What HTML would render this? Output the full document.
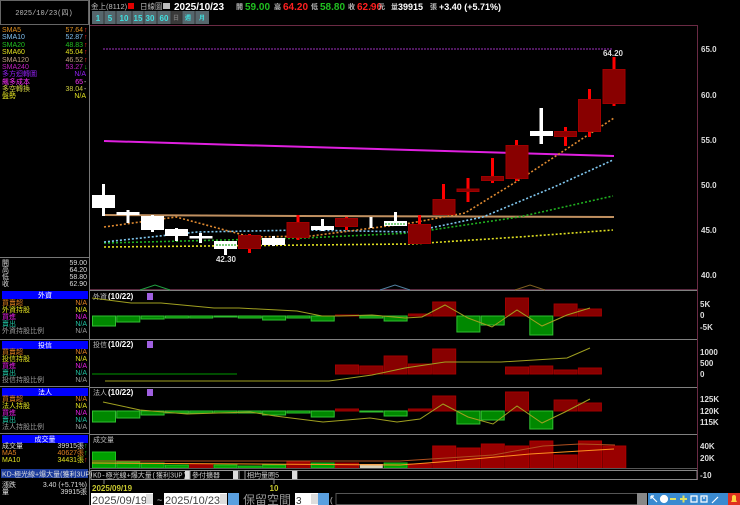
<!DOCTYPE html>
<html><head><meta charset="utf-8">
<style>
html,body{margin:0;padding:0;background:#000;width:740px;height:505px;overflow:hidden}
svg{display:block}
text{font-family:"Liberation Sans","Noto Sans CJK TC",sans-serif}
.s{font-size:7px;font-family:"Liberation Mono","Noto Sans CJK TC",monospace}
.ax{font-size:8px;fill:#ddd;font-weight:bold}
</style></head><body>
<svg width="740" height="505" viewBox="0 0 740 505" xmlns="http://www.w3.org/2000/svg">
<rect width="740" height="505" fill="#000"/>
<!-- left top box -->
<rect x="0.5" y="0.5" width="88" height="24" fill="#000" stroke="#666"/>
<text x="44" y="15" class="s" fill="#bbb" text-anchor="middle">2025/10/23(四)</text>
<line x1="89.5" y1="0" x2="89.5" y2="505" stroke="#777"/>
<!-- header -->
<text x="91" y="9" font-size="7.5" fill="#bbb">金上(8112)</text>
<rect x="128" y="3" width="6" height="6" fill="#e00000"/>
<text x="140" y="9" font-size="7.5" fill="#bbb">日線圖</text>
<rect x="163" y="3" width="7" height="6" fill="#bbb"/>
<g font-weight="bold" font-size="10">
<text x="174" y="10" fill="#fff">2025/10/23</text>
<text x="236" y="9" font-size="7" fill="#bbb">開</text><text x="245" y="10" fill="#20c020">59.00</text>
<text x="274" y="9" font-size="7" fill="#bbb">高</text><text x="283" y="10" fill="#ff2020">64.20</text>
<text x="311" y="9" font-size="7" fill="#bbb">低</text><text x="320" y="10" fill="#20c020">58.80</text>
<text x="348" y="9" font-size="7" fill="#bbb">收</text><text x="357" y="10" fill="#ff2020">62.90</text>
<text x="369" y="9" font-size="7" fill="#ff2020">↑</text>
<text x="378" y="9" font-size="7" fill="#bbb">元</text>
<text x="391" y="9" font-size="7" fill="#bbb">量</text>
<text x="398" y="10" fill="#fff" font-size="9">39915</text>
<text x="430" y="9" font-size="7" fill="#bbb">張</text>
<text x="439" y="10" fill="#fff" font-size="9">+3.40 (+5.71%)</text>
</g>
<!-- buttons -->
<g font-size="8" fill="#40e0e0" font-weight="bold" text-anchor="middle">
<rect x="92" y="11" width="117" height="13" fill="#56666c"/>
<rect x="171" y="11" width="11" height="13" fill="#3a3a3a"/>
<g stroke="#333"><line x1="104" y1="11" x2="104" y2="24"/><line x1="116" y1="11" x2="116" y2="24"/><line x1="132" y1="11" x2="132" y2="24"/><line x1="144" y1="11" x2="144" y2="24"/><line x1="157" y1="11" x2="157" y2="24"/><line x1="171" y1="11" x2="171" y2="24"/><line x1="182" y1="11" x2="182" y2="24"/><line x1="195" y1="11" x2="195" y2="24"/></g>
<text x="98" y="21">1</text><text x="110" y="21">5</text><text x="124" y="21">10</text><text x="138" y="21">15</text><text x="150" y="21">30</text><text x="164" y="21">60</text>
<text x="176" y="20" font-size="6" fill="#777">日</text><text x="188" y="20" font-size="6">週</text><text x="202" y="20" font-size="6">月</text>
</g>
<!-- chart frame -->
<line x1="90" y1="25.5" x2="697" y2="25.5" stroke="#6a2a44"/>
<line x1="697.5" y1="25" x2="697.5" y2="480" stroke="#6a2a44"/>
<g stroke="#808080"><line x1="90" y1="290.5" x2="697" y2="290.5"/><line x1="90" y1="339.5" x2="697" y2="339.5"/><line x1="90" y1="387.5" x2="697" y2="387.5"/><line x1="90" y1="434.5" x2="697" y2="434.5"/></g>
<line x1="90" y1="289.5" x2="697" y2="289.5" stroke="#5a2a40"/>
<!-- price axis -->
<text x="701" y="52" class="ax">65.0</text><text x="701" y="98" class="ax">60.0</text><text x="701" y="143" class="ax">55.0</text><text x="701" y="188" class="ax">50.0</text><text x="701" y="233" class="ax">45.0</text><text x="701" y="278" class="ax">40.0</text>
<line x1="103" y1="49" x2="612" y2="49" stroke="#a030c0" stroke-dasharray="2,1"/>
<text x="613" y="56" font-size="8" fill="#ddd" font-weight="bold" text-anchor="middle">64.20</text>
<text x="226" y="262" font-size="8" fill="#ddd" font-weight="bold" text-anchor="middle">42.30</text>
<!-- MAs -->
<polyline points="104,141 614,156" fill="none" stroke="#e020e0" stroke-width="2"/>
<polyline points="104,215 300,216 614,217" fill="none" stroke="#c09060" stroke-width="2"/>
<g fill="none" stroke-width="1.6" stroke-dasharray="2,2">
<polyline points="104,247 411,244 519,237 613,230" stroke="#e0e020"/>
<polyline points="104,243 304,238 411,233 519,217 613,196" stroke="#20b020"/>
<polyline points="104,242 197,232 304,230 411,232 483,217 554,187 613,160" stroke="#80c8f0"/>
<polyline points="104,227 176,217 251,237 311,236 411,223 465,213 519,180 565,150 614,118" stroke="#e08a30"/>
</g>
<!-- small humps -->
<polyline points="140,290 155,285 170,290" fill="none" stroke="#20a040"/>
<polyline points="380,290 395,285 410,290" fill="none" stroke="#5080a0"/>
<polyline points="515,290 530,285 545,290" fill="none" stroke="#806020"/>
<!-- candles -->
<g fill="#fff" stroke="none">
<rect x="102" y="184" width="3" height="32"/><rect x="92" y="195" width="23" height="13"/>
<rect x="126.5" y="210" width="3" height="13"/><rect x="116.5" y="212" width="23" height="3"/>
<rect x="151" y="215" width="3" height="17"/><rect x="141" y="216" width="23" height="14"/>
<rect x="175" y="228" width="3" height="13"/><rect x="165" y="229" width="23" height="7"/>
<rect x="199" y="233" width="3" height="10"/><rect x="189.5" y="236" width="23" height="2.5"/>
<rect x="224" y="241" width="3" height="14"/><rect x="214" y="241" width="23" height="8"/>
<rect x="272" y="236" width="3" height="10"/><rect x="262" y="238" width="23" height="7"/>
<rect x="321" y="219" width="3" height="12"/><rect x="311" y="226" width="23" height="4"/>
<rect x="369.5" y="217" width="3" height="11"/>
<rect x="394" y="212" width="3" height="14"/><rect x="384" y="221" width="23" height="5"/>
<rect x="539.5" y="108" width="3.5" height="36"/><rect x="530" y="131" width="23" height="5"/>
</g>
<g stroke="#00a000" stroke-width="1" stroke-dasharray="2,1"><line x1="216" y1="245" x2="236" y2="245"/><line x1="385" y1="224" x2="405" y2="224"/></g>
<g fill="#ff0000">
<rect x="248" y="234" width="3" height="19"/><rect x="296.5" y="215" width="3" height="25"/><rect x="345" y="217" width="3" height="13"/>
<rect x="418" y="215" width="3" height="29"/><rect x="442" y="184" width="3" height="31"/><rect x="466.5" y="178" width="3" height="24"/>
<rect x="491" y="158" width="3" height="25"/><rect x="515" y="140" width="3" height="41"/><rect x="564" y="127" width="3" height="19"/>
<rect x="588" y="89" width="3" height="48"/><rect x="612.5" y="57" width="3" height="49"/>
</g>
<g fill="#880000" stroke="#a00000">
<rect x="238.5" y="235.5" width="22" height="13"/><rect x="287" y="222.5" width="22" height="15"/><rect x="335.5" y="218.5" width="22" height="8"/>
<rect x="408.5" y="224.5" width="22" height="19"/><rect x="433" y="199.5" width="22" height="15"/><rect x="457" y="189" width="22" height="2.5"/>
<rect x="481.5" y="176.5" width="22" height="4"/><rect x="506" y="145.5" width="22" height="33"/><rect x="554.5" y="131.5" width="22" height="5"/>
<rect x="578.5" y="99.5" width="22" height="32"/><rect x="603" y="69.5" width="22" height="34"/>
</g>
<!-- panel 1 外資 -->
<text x="93" y="299" font-size="7" fill="#bbb">外資</text><text x="108" y="299" font-size="8" fill="#fff" font-weight="bold">(10/22)</text>
<rect x="147" y="293" width="6" height="7" fill="#a060e0"/>
<text x="700" y="307" class="ax">5K</text><text x="700" y="318" class="ax">0</text><text x="700" y="330" class="ax">-5K</text>
<g fill="#008800" stroke="#30c030">
<rect x="92.5" y="316" width="23" height="10"/><rect x="116.8" y="316" width="23" height="6"/><rect x="141.1" y="316" width="23" height="3"/><rect x="165.4" y="316" width="23" height="2"/><rect x="189.7" y="316" width="23" height="2"/><rect x="214" y="316" width="23" height="1"/><rect x="238.3" y="316" width="23" height="2"/><rect x="262.6" y="316" width="23" height="4"/><rect x="286.9" y="316" width="23" height="2"/><rect x="311.2" y="316" width="23" height="5"/><rect x="359.8" y="316" width="23" height="2"/><rect x="384.1" y="316" width="23" height="5"/><rect x="456.9" y="316" width="23" height="16"/><rect x="481.2" y="316" width="23" height="9"/><rect x="529.8" y="316" width="23" height="19"/>
</g>
<g fill="#880000" stroke="#a00000">
<rect x="335.5" y="315" width="23" height="1"/><rect x="408.4" y="314" width="23" height="2"/><rect x="432.7" y="302" width="23" height="14"/><rect x="505.5" y="298" width="23" height="18"/><rect x="554.1" y="304" width="23" height="12"/><rect x="578.4" y="309" width="23" height="7"/>
</g>
<polyline points="92,298 131,303 161,303 214,308 239,308 297,311 322,316 339,316 372,315 405,318 422,317 445,305 468,318 492,327 517,310 542,326 567,315 590,308" fill="none" stroke="#a0a020"/>
<!-- panel 2 投信 -->
<text x="93" y="347" font-size="7" fill="#bbb">投信</text><text x="108" y="347" font-size="8" fill="#fff" font-weight="bold">(10/22)</text>
<rect x="147" y="341" width="6" height="7" fill="#a060e0"/>
<text x="700" y="355" class="ax">1000</text><text x="700" y="366" class="ax">500</text><text x="700" y="377" class="ax">0</text>
<line x1="92" y1="374" x2="237" y2="374" stroke="#006600" stroke-width="1.5"/>
<g fill="#880000" stroke="#a00000">
<rect x="335.5" y="365" width="23" height="9"/><rect x="359.8" y="366" width="23" height="8"/><rect x="384.1" y="356" width="23" height="18"/><rect x="408.4" y="364" width="23" height="10"/><rect x="432.7" y="349" width="23" height="25"/><rect x="505.5" y="367" width="23" height="7"/><rect x="529.8" y="366" width="23" height="8"/><rect x="554.1" y="370" width="23" height="4"/><rect x="578.4" y="368" width="23" height="6"/>
</g>
<polyline points="105,381 329,381 372,375 405,368 445,362 501,362 567,358 590,348" fill="none" stroke="#a0a020"/>
<!-- panel 3 法人 -->
<text x="93" y="395" font-size="7" fill="#bbb">法人</text><text x="108" y="395" font-size="8" fill="#fff" font-weight="bold">(10/22)</text>
<rect x="147" y="389" width="6" height="7" fill="#a060e0"/>
<text x="700" y="402" class="ax">125K</text><text x="700" y="414" class="ax">120K</text><text x="700" y="425" class="ax">115K</text>
<g fill="#008800" stroke="#30c030">
<rect x="92.5" y="411" width="23" height="11"/><rect x="116.8" y="411" width="23" height="7"/><rect x="141.1" y="411" width="23" height="4"/><rect x="165.4" y="411" width="23" height="2"/><rect x="189.7" y="411" width="23" height="2"/><rect x="214" y="411" width="23" height="2"/><rect x="238.3" y="411" width="23" height="2"/><rect x="262.6" y="411" width="23" height="4"/><rect x="286.9" y="411" width="23" height="2"/><rect x="311.2" y="411" width="23" height="6"/><rect x="359.8" y="411" width="23" height="1"/><rect x="384.1" y="411" width="23" height="5"/><rect x="456.9" y="411" width="23" height="13"/><rect x="481.2" y="411" width="23" height="9"/><rect x="529.8" y="411" width="23" height="18"/>
</g>
<g fill="#880000" stroke="#a00000">
<rect x="335.5" y="409" width="23" height="2"/><rect x="408.4" y="409" width="23" height="2"/><rect x="432.7" y="396" width="23" height="15"/><rect x="505.5" y="392" width="23" height="19"/><rect x="554.1" y="400" width="23" height="11"/><rect x="578.4" y="403" width="23" height="8"/>
</g>
<polyline points="103,402 140,410 187,414 250,412 275,416 323,422 347,420 370,418 397,422 420,419 443,404 468,417 493,424 517,406 542,423 565,412 590,399" fill="none" stroke="#a0a020"/>
<!-- volume -->
<text x="93" y="442" font-size="7" fill="#bbb">成交量</text>
<text x="700" y="449" class="ax">40K</text><text x="700" y="461" class="ax">20K</text><text x="700" y="478" class="ax">-10</text>
<g fill="#00a000" stroke="#20c020">
<rect x="92.5" y="452" width="23" height="16"/><rect x="116.8" y="462" width="23" height="6"/><rect x="141.1" y="463" width="23" height="5"/><rect x="165.4" y="465" width="23" height="3"/><rect x="214" y="465" width="23" height="3"/><rect x="238.3" y="466" width="23" height="2"/><rect x="262.6" y="465" width="23" height="3"/><rect x="311.2" y="463" width="23" height="5"/><rect x="384.1" y="463" width="23" height="5"/>
</g>
<rect x="359.8" y="464" width="23" height="4" fill="#d8d0b8"/>
<g fill="#990000" stroke="#aa0000">
<rect x="189.7" y="464" width="23" height="4"/><rect x="286.9" y="462" width="23" height="6"/><rect x="335.5" y="463" width="23" height="5"/><rect x="408.4" y="464" width="23" height="4"/><rect x="432.7" y="446" width="23" height="22"/><rect x="457" y="448" width="23" height="20"/><rect x="481.3" y="444" width="23" height="24"/><rect x="505.6" y="446" width="23" height="22"/><rect x="529.9" y="441" width="23" height="27"/><rect x="554.2" y="455" width="23" height="13"/><rect x="578.5" y="441" width="23" height="27"/><rect x="602.8" y="446" width="23" height="22"/>
</g>
<polyline points="92,461 250,461 400,461 493,455 543,446 580,444 615,445" fill="none" stroke="#b05020"/>
<polyline points="92,463 400,465 440,462 530,454 614,449" fill="none" stroke="#ff9020"/>
<line x1="90" y1="468.5" x2="697" y2="468.5" stroke="#555"/>
<!-- combo row -->
<rect x="91" y="470.5" width="606" height="9" fill="#000" stroke="#888"/>
<rect x="91" y="470.5" width="99" height="9" fill="#000" stroke="#999"/>
<text x="93" y="477.5" class="s" fill="#ccc">KD-極光線+爆大量(獲利3UP)</text>
<rect x="185" y="471" width="5" height="8" fill="#ddd"/>
<rect x="190" y="470.5" width="49" height="9" fill="#000" stroke="#999"/>
<text x="192" y="477.5" class="s" fill="#ccc">參付擴器</text><rect x="233" y="471" width="5" height="8" fill="#ddd"/>
<rect x="245" y="470.5" width="52" height="9" fill="#000" stroke="#999"/>
<text x="247" y="477.5" class="s" fill="#ccc">相均量圈5</text><rect x="292" y="471" width="5" height="8" fill="#ddd"/>
<!-- date labels -->
<line x1="104" y1="480" x2="104" y2="484" stroke="#888"/><line x1="274" y1="480" x2="274" y2="484" stroke="#888"/>
<text x="92" y="491" font-size="8" fill="#c8c830" font-weight="bold">2025/09/19</text>
<text x="274" y="491" font-size="8" fill="#c8c830" font-weight="bold" text-anchor="middle">10</text>
<!-- bottom controls -->
<rect x="91" y="493" width="62" height="12" fill="#fff"/><text x="92" y="504" font-size="11" fill="#444">2025/09/19</text>
<rect x="146" y="494" width="7" height="10" fill="#ddd"/>
<text x="157" y="503" font-size="9" fill="#ccc">~</text>
<rect x="164" y="493" width="63" height="12" fill="#fff"/><text x="165" y="504" font-size="11" fill="#444">2025/10/23</text>
<rect x="220" y="494" width="7" height="10" fill="#ddd"/>
<rect x="228" y="493" width="11" height="12" fill="#5aa0e0"/>
<text x="243" y="504" font-size="12" fill="#999" font-family="'Noto Serif CJK SC',serif">保留空間</text>
<rect x="295" y="493" width="23" height="12" fill="#fff"/><text x="296" y="504" font-size="10" fill="#333">3</text>
<rect x="311" y="494" width="7" height="10" fill="#ddd"/>
<rect x="318" y="493" width="11" height="12" fill="#5aa0e0"/>
<text x="330" y="503" font-size="8" fill="#ccc">(</text>
<rect x="336" y="493.5" width="310" height="11" fill="#000" stroke="#555"/>
<rect x="637" y="493" width="10" height="12" fill="#888"/>
<g fill="#3a8ad0"><rect x="648" y="493" width="80" height="12"/></g>
<g stroke="#fff" stroke-width="1.2" fill="none">
<path d="M651 496 l6 6 M651 496 h3 M651 496 v3"/>
<circle cx="664" cy="499" r="3.5" fill="#fff"/>
<path d="M670 499 h6" stroke="#e0e060" stroke-width="2"/>
<path d="M680 499 h7 M683.5 495.5 v7" stroke="#e0e060" stroke-width="2"/>
<path d="M691 496 h6 v6 h-6 z"/>
<path d="M701 496 h6 v6 h-6 z M703 498 h2"/>
<path d="M712 503 l6 -6"/>
</g>
<rect x="728" y="493" width="12" height="12" fill="#e03020"/>
<path d="M731 502 h6 l-1 -2 v-3 a2 2 0 0 0 -4 0 v3 z" fill="#ffd040"/>

<!-- LEFT PANEL -->
<g class="s">
<text x="2" y="32" fill="#e09020">SMA5</text><text x="83" y="32" fill="#e09020" text-anchor="end">57.64</text><text x="84" y="32" fill="#ff2020">↑</text>
<text x="2" y="39" fill="#80c0f0">SMA10</text><text x="83" y="39" fill="#80c0f0" text-anchor="end">52.87</text><text x="84" y="39" fill="#ff2020">↑</text>
<text x="2" y="47" fill="#20c020">SMA20</text><text x="83" y="47" fill="#20c020" text-anchor="end">48.83</text><text x="84" y="47" fill="#ff2020">↑</text>
<text x="2" y="54" fill="#e0e020">SMA60</text><text x="83" y="54" fill="#e0e020" text-anchor="end">45.04</text><text x="84" y="54" fill="#ff2020">↑</text>
<text x="2" y="62" fill="#c0a080">SMA120</text><text x="83" y="62" fill="#c0a080" text-anchor="end">46.52</text><text x="84" y="62" fill="#ff2020">↑</text>
<text x="2" y="69" fill="#c020c0">SMA240</text><text x="83" y="69" fill="#c020c0" text-anchor="end">53.27</text><text x="84" y="69" fill="#20c020">↓</text>
<text x="2" y="76" fill="#9020f0">多方迴轉圖</text><text x="86" y="76" fill="#9020f0" text-anchor="end">N/A</text>
<text x="2" y="84" fill="#ff30ff">飆多成本</text><text x="83" y="84" fill="#ff30ff" text-anchor="end">65</text><text x="84" y="84" fill="#ccc">-</text>
<text x="2" y="91" fill="#d0d040">多空轉換</text><text x="83" y="91" fill="#d0d040" text-anchor="end">38.04</text><text x="84" y="91" fill="#ccc">-</text>
<text x="2" y="98" fill="#e0e020">盤勢</text><text x="86" y="98" fill="#e0e020" text-anchor="end">N/A</text>
</g>
<line x1="0" y1="257.5" x2="89" y2="257.5" stroke="#777"/>
<g class="s" fill="#ddd">
<text x="2" y="265">開</text><text x="87" y="265" text-anchor="end">59.00</text>
<text x="2" y="272">高</text><text x="87" y="272" text-anchor="end">64.20</text>
<text x="2" y="279">低</text><text x="87" y="279" text-anchor="end">58.80</text>
<text x="2" y="286">收</text><text x="87" y="286" text-anchor="end">62.90</text>
</g>
<g class="s">
<rect x="2" y="291" width="86" height="8" fill="#0000ff"/><text x="45" y="297.5" fill="#fff" text-anchor="middle">外資</text>
<text x="2" y="305" fill="#e08020">買賣超</text><text x="87" y="305" fill="#e08020" text-anchor="end">N/A</text>
<text x="2" y="312" fill="#e0e020">外資持股</text><text x="87" y="312" fill="#e0e020" text-anchor="end">N/A</text>
<text x="2" y="319" fill="#e020e0">買進</text><text x="87" y="319" fill="#e020e0" text-anchor="end">N/A</text>
<text x="2" y="326" fill="#20c0a0">賣出</text><text x="87" y="326" fill="#20c0a0" text-anchor="end">N/A</text>
<text x="2" y="333" fill="#999">外資持股比例</text><text x="87" y="333" fill="#999" text-anchor="end">N/A</text>
<line x1="0" y1="339.5" x2="89" y2="339.5" stroke="#777"/>
<rect x="2" y="341" width="86" height="8" fill="#0000ff"/><text x="45" y="347.5" fill="#fff" text-anchor="middle">投信</text>
<text x="2" y="354" fill="#e08020">買賣超</text><text x="87" y="354" fill="#e08020" text-anchor="end">N/A</text>
<text x="2" y="361" fill="#e0e020">投信持股</text><text x="87" y="361" fill="#e0e020" text-anchor="end">N/A</text>
<text x="2" y="368" fill="#e020e0">買進</text><text x="87" y="368" fill="#e020e0" text-anchor="end">N/A</text>
<text x="2" y="375" fill="#20c0a0">賣出</text><text x="87" y="375" fill="#20c0a0" text-anchor="end">N/A</text>
<text x="2" y="382" fill="#999">投信持股比例</text><text x="87" y="382" fill="#999" text-anchor="end">N/A</text>
<line x1="0" y1="386.5" x2="89" y2="386.5" stroke="#777"/>
<rect x="2" y="388" width="86" height="8" fill="#0000ff"/><text x="45" y="394.5" fill="#fff" text-anchor="middle">法人</text>
<text x="2" y="401" fill="#e08020">買賣超</text><text x="87" y="401" fill="#e08020" text-anchor="end">N/A</text>
<text x="2" y="408" fill="#e0e020">法人持股</text><text x="87" y="408" fill="#e0e020" text-anchor="end">N/A</text>
<text x="2" y="415" fill="#e020e0">買進</text><text x="87" y="415" fill="#e020e0" text-anchor="end">N/A</text>
<text x="2" y="422" fill="#20c0a0">賣出</text><text x="87" y="422" fill="#20c0a0" text-anchor="end">N/A</text>
<text x="2" y="429" fill="#999">法人持股比例</text><text x="87" y="429" fill="#999" text-anchor="end">N/A</text>
<line x1="0" y1="433.5" x2="89" y2="433.5" stroke="#777"/>
<rect x="2" y="435" width="86" height="8" fill="#0000ff"/><text x="45" y="441.5" fill="#fff" text-anchor="middle">成交量</text>
<text x="2" y="448" fill="#ddd">成交量</text><text x="84" y="448" fill="#ddd" text-anchor="end">39915張</text><text x="84" y="448" fill="#20c020">↑</text>
<text x="2" y="455" fill="#e08020">MA5</text><text x="84" y="455" fill="#e08020" text-anchor="end">40627張</text><text x="84" y="455" fill="#20c020">↑</text>
<text x="2" y="462" fill="#e0e020">MA10</text><text x="84" y="462" fill="#e0e020" text-anchor="end">34431張</text><text x="84" y="462" fill="#ff2020">↑</text>
<rect x="1" y="469" width="87" height="9" fill="#1a3a9a"/><text x="2" y="476.5" fill="#ddd">KD-極光線+爆大量(獲利3UP)</text>
<text x="2" y="487" fill="#ddd">漲跌</text><text x="87" y="487" fill="#ddd" text-anchor="end">3.40 (+5.71%)</text>
<text x="2" y="494" fill="#ddd">量</text><text x="87" y="494" fill="#ddd" text-anchor="end">39915張</text>
</g>
</svg>
</body></html>
